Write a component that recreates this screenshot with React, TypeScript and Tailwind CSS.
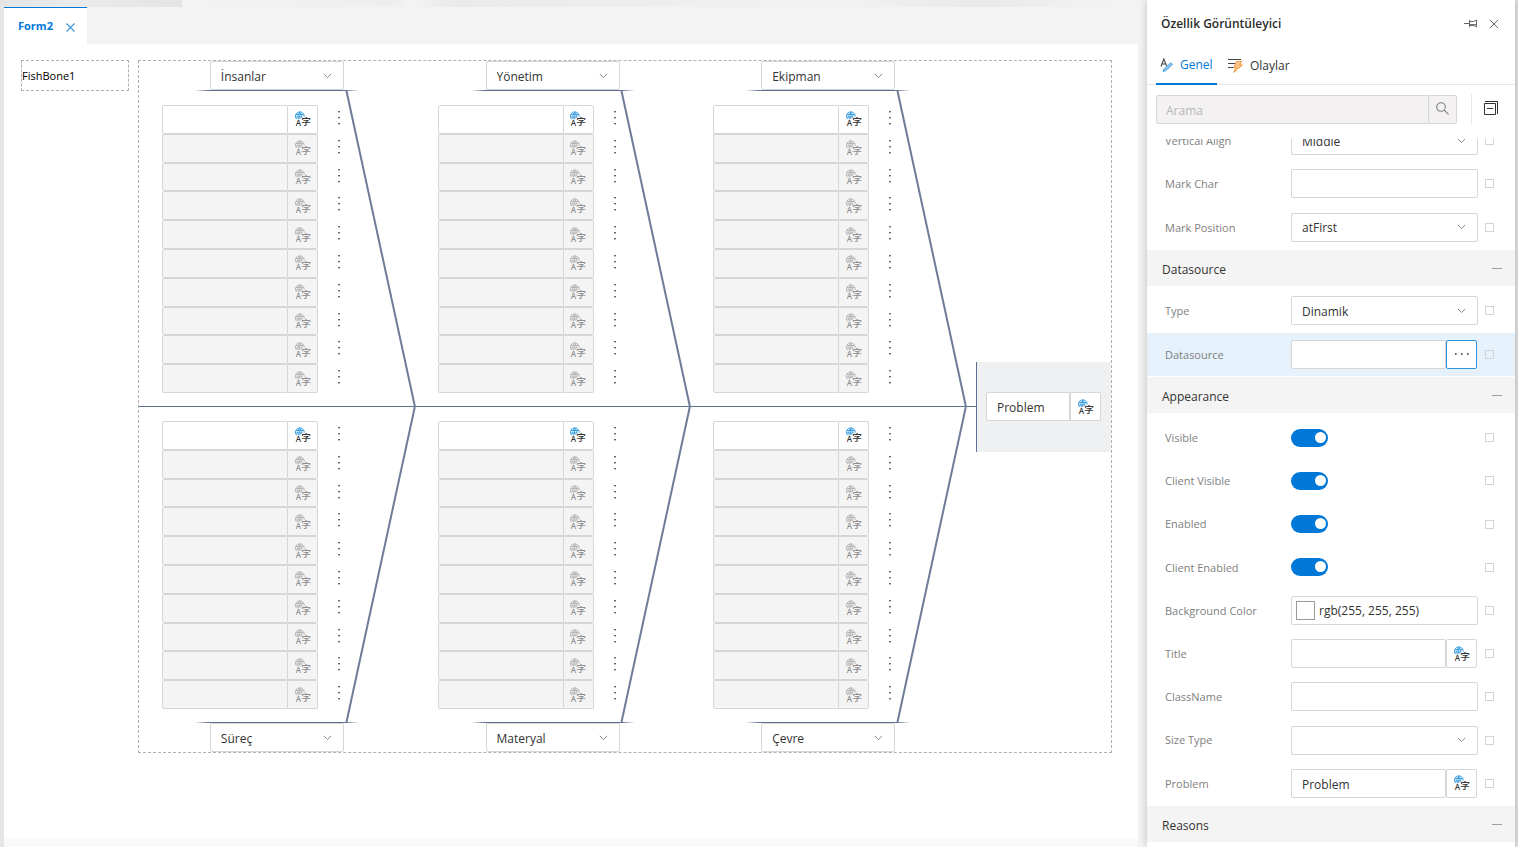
import React, { useId, useState } from "react";

type HalfProps = { title: string; options: string[]; flipped?: boolean };

function TranslateIcon({ muted = false }: { muted?: boolean }) {
  const globe = muted ? "#b0b0b0" : "#2b95dc";
  const ink = muted ? "#8f8f8f" : "#333333";
  return (
    <svg width="16" height="16" viewBox="0 0 16 16" aria-hidden="true" className="shrink-0">
      <g fill="none" stroke={globe} strokeWidth="0.9">
        <path d="M1.6 8.2A4.4 4.4 0 1 1 9.2 5.8" />
        <path d="M3.4 8.4C2.4 6 2.8 3 4.6 1.1C6.3 2.4 7 4.2 6.8 6.4" />
        <path d="M4.8 1v7M0.9 3.5h7.8M0.5 6h6.6" />
      </g>
      <text x="0.8" y="15.4" fontSize="8" fontWeight="600" fill={ink} fontFamily="Open Sans, sans-serif">
        A
      </text>
      <text x="6.2" y="13.8" fontSize="9.6" fontWeight="500" fill={ink} fontFamily="Noto Sans CJK SC, sans-serif">
        字
      </text>
    </svg>
  );
}

function Chevron() {
  return (
    <svg
      width="9"
      height="6"
      viewBox="0 0 9 6"
      aria-hidden="true"
      className="pointer-events-none absolute top-1/2 right-3 -translate-y-1/2"
    >
      <path d="M0.8 0.8L4.5 4.6L8.2 0.8" fill="none" stroke="#8a8a8a" />
    </svg>
  );
}

function Select({ id, label, value, options }: { id?: string; label?: string; value: string; options: string[] }) {
  return (
    <div className="relative w-full">
      <select
        id={id}
        aria-label={label}
        defaultValue={value}
        className="block h-[29px] w-full appearance-none rounded-xs border border-[#d6d6d6] bg-white pt-[2px] pr-6 pl-[10px] text-[12px] text-[#333333] outline-none"
      >
        {options.map((o) => (
          <option key={o}>{o}</option>
        ))}
      </select>
      <Chevron />
    </div>
  );
}

function CauseRow({ label, active }: { label: string; active: boolean }) {
  return (
    <div className="flex">
      <div className="flex w-[156px]">
        <input
          aria-label={label}
          disabled={!active}
          className="min-w-0 flex-1 rounded-l-xs border border-[#d6d6d6] bg-white px-2 text-[12px] outline-none disabled:bg-[#f4f4f4]"
        />
        <button
          type="button"
          aria-label={`${label} translations`}
          disabled={!active}
          className="flex w-[30px] items-center justify-center rounded-r-xs border border-l-0 border-[#d6d6d6] bg-white disabled:bg-[#f4f4f4]"
        >
          <TranslateIcon muted={!active} />
        </button>
      </div>
      <button type="button" aria-label={`${label} menu`} className="ml-[13px] flex w-4 justify-center pt-[6px]">
        <svg width="2" height="14" viewBox="0 0 2 14" aria-hidden="true" fill="#666666">
          <rect width="2" height="1.4" y="0" />
          <rect width="2" height="1.4" y="6" />
          <rect width="2" height="1.4" y="12" />
        </svg>
      </button>
    </div>
  );
}

function BoneHalf({ title, options, flipped = false }: HalfProps) {
  const cap = (
    <div className="mx-auto h-px w-[164px] bg-[linear-gradient(90deg,transparent,#5f6f90_8%,#5f6f90_92%,transparent)]" />
  );
  const select = (
    <div className="mx-auto w-[134px]">
      <Select label={title} value={title} options={options} />
    </div>
  );
  return (
    <section className="relative min-w-0 flex-1">
      {!flipped && select}
      {!flipped && cap}
      <div className="grid min-h-[315px] pt-[14px] pb-[13px] pl-[23px]">
        <div className="grid auto-rows-fr">
          {Array.from({ length: 10 }, (_, i) => (
            <CauseRow key={i} label={`${title} ${i + 1}`} active={i === 0} />
          ))}
        </div>
      </div>
      {flipped && cap}
      {flipped && select}
      <svg
        width="70"
        height="315"
        viewBox="0 0 70 315"
        aria-hidden="true"
        className={`pointer-events-none absolute right-0 overflow-visible ${flipped ? "top-0" : "bottom-0"}`}
      >
        <path
          d={flipped ? "M69.8 0L1.5 315" : "M1.5 0L69.8 315"}
          stroke="#6f7c99"
          strokeWidth="2"
          fill="none"
        />
      </svg>
    </section>
  );
}

const CATEGORIES = ["İnsanlar", "Yönetim", "Ekipman", "Süreç", "Materyal", "Çevre"];

function FishBone() {
  return (
    <div className="flex min-w-0 flex-1 items-center border border-dashed border-[#b0b0b0]">
      <div className="min-w-0 flex-1">
        <div className="flex pr-[10px]">
          {CATEGORIES.slice(0, 3).map((c) => (
            <BoneHalf key={c} title={c} options={CATEGORIES} />
          ))}
        </div>
        <div className="h-px bg-[#5f6f90]" />
        <div className="flex pr-[10px]">
          {CATEGORIES.slice(3).map((c) => (
            <BoneHalf key={c} title={c} options={CATEGORIES} flipped />
          ))}
        </div>
      </div>
      <div className="flex h-[90px] w-[135px] items-center border-l border-[#5f6f90] bg-[#eff0f2] pr-[10px] pl-[9px]">
        <input
          aria-label="Problem"
          defaultValue="Problem"
          className="h-[29px] min-w-0 flex-1 rounded-l-xs border border-[#d6d6d6] bg-white pt-[2px] pl-[10px] text-[12px] text-[#333333] outline-none"
        />
        <button
          type="button"
          aria-label="Problem translations"
          className="flex h-[29px] w-[31px] items-center justify-center rounded-r-xs border border-[#d6d6d6] bg-white"
        >
          <TranslateIcon />
        </button>
      </div>
    </div>
  );
}

function Toggle({ id }: { id: string }) {
  const [on, setOn] = useState(true);
  return (
    <input
      id={id}
      type="checkbox"
      role="switch"
      checked={on}
      onChange={() => setOn(!on)}
      className="block h-[18px] w-[37px] appearance-none rounded-full bg-[#b5b5b5] before:mt-[3px] before:ml-[3px] before:block before:size-[11px] before:rounded-full before:bg-white checked:bg-[#0078d7] checked:before:ml-6"
    />
  );
}

type Kind = "text" | "select" | "toggle" | "color" | "translate" | "more";

const FIELD =
  "h-[29px] min-w-0 flex-1 rounded-xs border border-[#d6d6d6] bg-white px-[10px] pt-[2px] text-[12px] text-[#333333] outline-none";

function PropertyRow({ label, kind, value = "", selected = false }: {
  label: string;
  kind: Kind;
  value?: string;
  selected?: boolean;
}) {
  const id = useId();
  return (
    <div className={`flex min-w-0 items-center pr-[21px] pl-[18px] ${selected ? "bg-[#e5f1fb]" : ""}`}>
      <label htmlFor={id} className="w-[126px] shrink-0 pt-px text-[11px] text-[#808080]">
        {label}
      </label>
      <div className="flex min-w-0 flex-1">
        {kind === "text" && <input id={id} defaultValue={value} className={FIELD} />}
        {kind === "select" && <Select id={id} value={value} options={[value]} />}
        {kind === "toggle" && <Toggle id={id} />}
        {kind === "color" && (
          <div className="flex h-[29px] min-w-0 flex-1 items-center rounded-xs border border-[#d6d6d6] bg-white pl-1">
            <span className="size-[19px] shrink-0 border border-[#9a9a9a] bg-white" />
            <input
              id={id}
              defaultValue={value}
              className="min-w-0 flex-1 pt-[2px] pl-1 text-[12px] text-[#333333] outline-none"
            />
          </div>
        )}
        {(kind === "translate" || kind === "more") && (
          <div className="flex min-w-0 flex-1 pr-px">
            <input id={id} defaultValue={value} className={FIELD} />
            <button
              type="button"
              aria-label={kind === "more" ? `Choose ${label}` : `${label} translations`}
              className={`flex w-[31px] shrink-0 items-center justify-center rounded-xs border bg-white ${
                kind === "more" ? "border-[#2b95dc]" : "border-[#d6d6d6]"
              }`}
            >
              {kind === "more" ? (
                <svg width="14" height="2" viewBox="0 0 14 2" aria-hidden="true" fill="#666666">
                  <rect width="1.6" height="2" />
                  <rect width="1.6" height="2" x="6" />
                  <rect width="1.6" height="2" x="12" />
                </svg>
              ) : (
                <TranslateIcon />
              )}
            </button>
          </div>
        )}
      </div>
      <input
        type="checkbox"
        aria-label={`Bind ${label}`}
        className="ml-[7px] size-[9px] shrink-0 appearance-none border border-[#d4d4d4] checked:bg-[#0078d7]"
      />
    </div>
  );
}

function GroupHeader({ title }: { title: string }) {
  return (
    <button
      type="button"
      className="mt-px flex h-9 w-full items-center justify-between bg-[#f4f4f4] pr-[13px] pl-[15px] text-[12px] text-[#333333]"
    >
      <span className="pt-[3px]">{title}</span>
      <span className="h-px w-[10px] bg-[#a0a0a0]" />
    </button>
  );
}

function PropertyPanel() {
  return (
    <aside className="z-10 mr-[3px] flex w-[368px] shrink-0 flex-col bg-white shadow-[0_0_8px_rgba(0,0,0,0.22)]">
      <header className="flex h-[47px] shrink-0 items-center pr-4 pl-[14px]">
        <h2 className="flex-1 text-[12px] font-semibold text-[#2b2b2b]">Özellik Görüntüleyici</h2>
        <button type="button" aria-label="Pin" className="mr-[11px]">
          <svg width="14" height="10" viewBox="0 0 14 10" aria-hidden="true" fill="none" stroke="#666666">
            <path d="M0 4.5h5M5.5 0.8v7.4M5.5 2.5H9.5L12.5 1.2V7.8L9.5 6.5H5.5M5.5 5.6h6.5" />
          </svg>
        </button>
        <button type="button" aria-label="Close">
          <svg width="10" height="10" viewBox="0 0 10 10" aria-hidden="true" fill="none" stroke="#666666">
            <path d="M1 1l8 8M9 1L1 9" />
          </svg>
        </button>
      </header>

      <nav className="flex h-[38px] shrink-0 border-b border-[#e8e8e8] pl-[9px] text-[12px]" role="tablist">
        <button
          type="button"
          role="tab"
          aria-selected="true"
          className="-mb-px flex w-[61px] items-center gap-[6px] border-b-2 border-[#0078d7] pl-1 text-[#0078d7]"
        >
          <svg width="14" height="14" viewBox="0 0 14 14" aria-hidden="true" className="shrink-0">
            <path d="M1 8.5L3.8 1L6.6 8M2 6h3.8" fill="none" stroke="#444444" strokeWidth="1.1" />
            <path d="M3 13.5L3.8 11L10.8 4.8L12.6 6.4L5.8 12.8Z" fill="#8cc6f0" stroke="#2b8fd8" strokeWidth="0.7" />
          </svg>
          <span className="font-medium">Genel</span>
        </button>
        <button type="button" role="tab" aria-selected="false" className="flex items-center gap-[7px] pl-[11px] text-[#333333]">
          <svg width="15" height="15" viewBox="0 0 15 15" aria-hidden="true" className="shrink-0">
            <path d="M0 1.5h13M0 5.5h7.5M0 9.5h5.5" stroke="#444444" strokeWidth="1.1" />
            <path d="M8.6 3.4h5L11.8 7h2.7L5.6 14.4L8 9.4H5.8Z" fill="#fbc58a" stroke="#f08a24" strokeWidth="0.8" />
          </svg>
          <span>Olaylar</span>
        </button>
      </nav>

      <div className="flex shrink-0 items-center pt-[9px] pr-[17px] pb-[15px] pl-[9px]">
        <input
          type="search"
          aria-label="Arama"
          placeholder="Arama"
          className="h-[29px] min-w-0 flex-1 rounded-l-xs border border-[#d6d6d6] bg-[#f3f1f2] px-[9px] pt-[2px] text-[12px] outline-none placeholder:text-[#b8b8b8]"
        />
        <button
          type="button"
          aria-label="Search"
          className="flex h-[29px] w-7 items-center justify-center rounded-r-xs border border-l-0 border-[#d6d6d6] bg-[#f3f1f2] pb-[2px]"
        >
          <svg width="13" height="13" viewBox="0 0 13 13" aria-hidden="true" fill="none" stroke="#808080" strokeWidth="1.1">
            <circle cx="5" cy="5" r="4.3" />
            <path d="M8.2 8.2L12.6 12.4" />
          </svg>
        </button>
        <span className="ml-[14px] h-[30px] w-px bg-[#e8e8e8]" />
        <button type="button" aria-label="Collapse all" className="ml-3 pb-[2px]">
          <svg width="14" height="14" viewBox="0 0 14 14" aria-hidden="true" fill="none" stroke="#333333">
            <path d="M0.5 2.5h11v11h-11zM1 0.5h12.5V13M3 7.5h6" />
          </svg>
        </button>
      </div>

      <div className="min-h-0 flex-1 overflow-hidden">
        <div className="-mt-5 grid min-h-[130px] auto-rows-fr grid-cols-1">
          <PropertyRow label="Vertical Align" kind="select" value="Middle" />
          <PropertyRow label="Mark Char" kind="text" />
          <PropertyRow label="Mark Position" kind="select" value="atFirst" />
        </div>
        <GroupHeader title="Datasource" />
        <div className="mt-[3px] grid min-h-[87px] auto-rows-fr grid-cols-1">
          <PropertyRow label="Type" kind="select" value="Dinamik" />
          <PropertyRow label="Datasource" kind="more" selected />
        </div>
        <GroupHeader title="Appearance" />
        <div className="mt-[3px] grid min-h-[389px] auto-rows-fr grid-cols-1">
          <PropertyRow label="Visible" kind="toggle" />
          <PropertyRow label="Client Visible" kind="toggle" />
          <PropertyRow label="Enabled" kind="toggle" />
          <PropertyRow label="Client Enabled" kind="toggle" />
          <PropertyRow label="Background Color" kind="color" value="rgb(255, 255, 255)" />
          <PropertyRow label="Title" kind="translate" />
          <PropertyRow label="ClassName" kind="text" />
          <PropertyRow label="Size Type" kind="select" />
          <PropertyRow label="Problem" kind="translate" value="Problem" />
        </div>
        <GroupHeader title="Reasons" />
      </div>
    </aside>
  );
}

export default function App() {
  return (
    <div className="flex h-screen overflow-hidden bg-[linear-gradient(90deg,#e5e5e5,#ebebeb_5%,#e4e4e4_12%,#f3f3f3_12%,#eeeeee_26%,#f3f3f3_27%,#eaeaea_30%,#efefef_46%,#f2f2f2_55%,#e9e9e9_65%,#f2f2f2_72%,#f4f4f3_80%,#f4f4f3_97%,#e2e2e2_99%)] font-['Open_Sans','Noto_Sans',sans-serif]">
      <main className="mt-[7px] mr-[9px] ml-1 flex min-w-0 flex-1 flex-col">
        <div className="flex h-[37px] shrink-0 bg-[#f3f3f3]" role="tablist">
          <div className="flex w-[83px] items-center border-t border-[#0078d7] bg-white pt-px pl-[14px]">
            <button type="button" role="tab" aria-selected="true" className="text-[11px] font-bold text-[#0078d7]">
              Form2
            </button>
            <button type="button" aria-label="Close Form2" className="ml-auto pt-[2px] pr-3">
              <svg width="9" height="9" viewBox="0 0 9 9" aria-hidden="true" fill="none" stroke="#3b97df" strokeWidth="1.1">
                <path d="M0.5 0.5l8 8M8.5 0.5l-8 8" />
              </svg>
            </button>
          </div>
        </div>
        <div className="flex flex-1 items-start gap-[9px] bg-white pt-4 pr-[26px] pl-[17px]">
          <div className="flex h-[31px] w-[108px] shrink-0 items-center border border-dashed border-[#b0b0b0] pt-px text-[11px] text-black">
            FishBone1
          </div>
          <FishBone />
        </div>
        <div className="h-[9px] shrink-0 bg-[#faf9f8]" />
      </main>
      <PropertyPanel />
    </div>
  );
}
